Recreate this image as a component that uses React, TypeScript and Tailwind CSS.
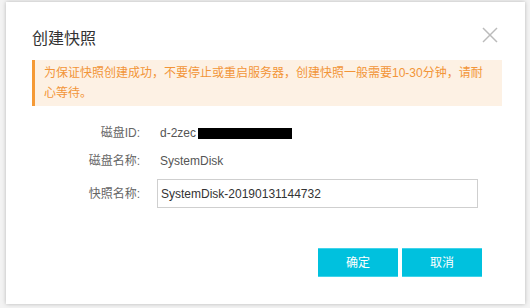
export default function App() {
  const font = { fontFamily: '"Liberation Sans", "Noto Sans CJK SC", sans-serif' };
  return (
    <div className="w-[530px] h-[308px] bg-[#f3f3f3] overflow-hidden" style={font}>
      <div className="ml-[6px] pt-[2px]">
        <div className="w-[519px] h-[302px] bg-white shadow-[0_0_4px_rgba(0,0,0,0.25)] pl-[26px] pr-[23px]">
          <div className="flex items-start justify-between pt-[26px]">
            <h2 className="text-[16px] leading-[22px] text-[#333]">创建快照</h2>
            <button className="mt-[-1px] mr-[4px] text-[#bbb]">
              <svg width="16" height="16" viewBox="0 0 16 16" stroke="currentColor" strokeWidth="1.5">
                <line x1="1" y1="1" x2="15" y2="15" />
                <line x1="15" y1="1" x2="1" y2="15" />
              </svg>
            </button>
          </div>

          <div className="mt-[10px] border-l-[3px] border-[#f59a36] bg-[#fdf1e4] pl-[9px] pr-[10px] py-[3px] text-[12px] leading-[20px] text-[#f29538]">
            为保证快照创建成功，不要停止或重启服务器，创建快照一般需要10-30分钟，请耐
            <br />
            心等待。
          </div>

          <div className="mt-[13px] text-[12px]">
            <div className="flex items-center h-[28px]">
              <span className="w-[108px] text-right text-[#666]">磁盘ID:</span>
              <span className="ml-[20px] flex items-center text-[#555]">
                d-2zec
                <span className="inline-block w-[94px] h-[11px] bg-black ml-[2px]" />
              </span>
            </div>
            <div className="flex items-center h-[28px]">
              <span className="w-[108px] text-right text-[#666]">磁盘名称:</span>
              <span className="ml-[20px] text-[#555]">SystemDisk</span>
            </div>
            <div className="flex items-center mt-[4px]">
              <span className="w-[108px] text-right text-[#666]">快照名称:</span>
              <input
                readOnly
                value="SystemDisk-20190131144732"
                className="ml-[17px] w-[321px] h-[29px] border border-[#cfcfcf] px-[3px] text-[12px] text-[#333] outline-none"
                style={font}
              />
            </div>
          </div>

          <div className="mt-[40px] flex justify-end gap-[4px] pr-[20px]">
            <button className="w-[80px] h-[29px] bg-[#00c1de] border-y border-[#3fd3ea] text-white text-[12px]">
              确定
            </button>
            <button className="w-[80px] h-[29px] bg-[#00c1de] border-y border-[#3fd3ea] text-white text-[12px]">
              取消
            </button>
          </div>
        </div>
      </div>
    </div>
  );
}
